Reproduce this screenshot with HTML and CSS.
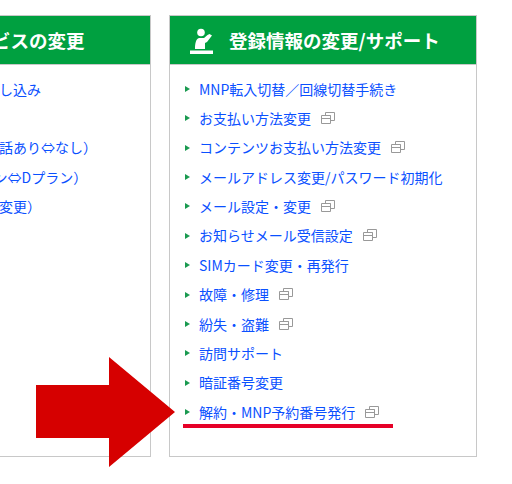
FILE: index.html
```html
<!DOCTYPE html>
<html lang="ja">
<head>
<meta charset="UTF-8">
<title>登録情報の変更/サポート</title>
<link rel="stylesheet" href="styles.css">
</head>
<body>
<svg width="0" height="0" class="defs">
  <symbol id="win" viewBox="0 0 14 12">
    <path d="M4.5 3.5V.5h9v8h-4M.5 3.5h9v8h-9zM.5 6.5h9M4.5 3.5h5" fill="none" stroke="#999"/>
  </symbol>
</svg>
<div class="page">
  <div class="cards">
    <section class="card">
      <h2 class="card_head card_head-left">契約サービスの変更</h2>
      <ul class="links">
        <li><a>各種サービスのお申し込み</a></li>
        <li><a>契約内容の確認</a></li>
        <li><a>料金プラン変更（通話あり⇔なし）</a></li>
        <li><a>データ変更（Aプラン⇔Dプラン）</a></li>
        <li><a>メールアドレス等（変更）</a></li>
      </ul>
    </section>
    <section class="card">
      <h2 class="card_head">
        <svg class="card_ico" width="23" height="27" viewBox="0 0 23 27">
          <circle cx="11" cy="5.5" r="3.8" fill="#fff"/>
          <path d="M5 22C5 16 6 12 9 11H14L17.5 8 19.5 7 22 8.5 17 15 15 16V22z" fill="#fff"/>
          <rect x="0" y="23.5" width="23" height="3.5" fill="#fff"/>
        </svg>
        登録情報の変更/サポート
      </h2>
      <ul class="links">
        <li><a>MNP転入切替／回線切替手続き</a></li>
        <li><a>お支払い方法変更</a><svg class="win"><use href="#win"/></svg></li>
        <li><a>コンテンツお支払い方法変更</a><svg class="win"><use href="#win"/></svg></li>
        <li><a>メールアドレス変更/パスワード初期化</a></li>
        <li><a>メール設定・変更</a><svg class="win"><use href="#win"/></svg></li>
        <li><a>お知らせメール受信設定</a><svg class="win"><use href="#win"/></svg></li>
        <li><a>SIMカード変更・再発行</a></li>
        <li><a>故障・修理</a><svg class="win"><use href="#win"/></svg></li>
        <li><a>紛失・盗難</a><svg class="win"><use href="#win"/></svg></li>
        <li><a>訪問サポート</a></li>
        <li><a>暗証番号変更</a></li>
        <li><a>解約・MNP予約番号発行</a><svg class="win"><use href="#win"/></svg></li>
      </ul>
    </section>
  </div>
  <div class="mark"></div>
  <svg class="arrow" width="140" height="110" viewBox="0 0 140 110">
    <path d="M0 28H73V0L139 55 73 110V81H0z" fill="#d60000"/>
  </svg>
</div>
</body>
</html>
```

FILE: styles.css
```css
html, body {
    margin: 0;
    padding: 0;
    background: #fff;
}
.defs {
    display: block;
    height: 0;
}
.page {
    position: relative;
    width: 512px;
    height: 484px;
    overflow: hidden;
    font-family: "Noto Sans CJK JP", "Noto Sans", sans-serif;
}
.cards {
    display: flex;
    gap: 18px;
    margin-left: -157px;
    padding-top: 15px;
}
.card {
    width: 306px;
    height: 440px;
    border: 1px solid #c8c8c8;
    flex: none;
}
.card_head {
    display: flex;
    align-items: center;
    gap: 16px;
    height: 48px;
    margin: 0;
    padding-left: 20px;
    background: #00a040;
    border-bottom: 1px solid #c8c8c8;
    color: #fff;
    font-size: 18.5px;
    font-weight: 700;
    line-height: 47px;
    white-space: nowrap;
}
.card_head-left {
    padding-left: 74px;
}
.card_ico {
    flex: none;
}
.links {
    list-style: none;
    margin: 0;
    padding: 9px 0 0 15px;
}
.links li {
    display: flex;
    align-items: center;
    height: 29.36px;
    padding-left: 14px;
    position: relative;
    font-size: 14px;
    white-space: nowrap;
}
.links li::before {
    content: "";
    position: absolute;
    left: 0;
    top: 12px;
    border-left: 5px solid #1a9a50;
    border-top: 3.5px solid transparent;
    border-bottom: 3.5px solid transparent;
}
.links a {
    color: #0a50ff;
}
.win {
    width: 14px;
    height: 12px;
    margin-left: 10px;
}
.mark {
    position: absolute;
    left: 183px;
    top: 424px;
    width: 210px;
    height: 3.5px;
    background: #e60027;
}
.arrow {
    position: absolute;
    left: 36px;
    top: 357px;
}
```
